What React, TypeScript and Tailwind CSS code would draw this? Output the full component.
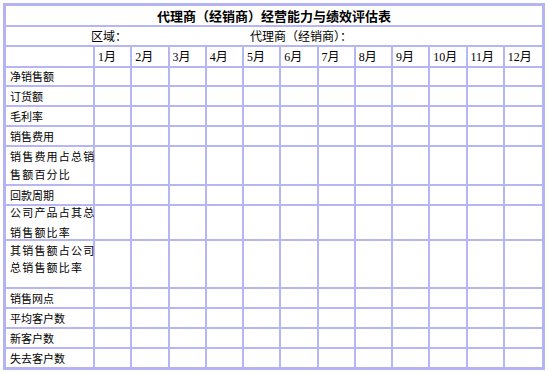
import React from 'react';

const months = ['1月', '2月', '3月', '4月', '5月', '6月', '7月', '8月', '9月', '10月', '11月', '12月'];

// label lines, row height (border included), gap between wrapped lines
const rows: { lines: string[]; h: string; gap?: string; top?: boolean }[] = [
    { lines: ['净销售额'], h: 'h-[19px]' },
    { lines: ['订货额'], h: 'h-[20px]' },
    { lines: ['毛利率'], h: 'h-[20px]' },
    { lines: ['销售费用'], h: 'h-[20px]' },
    { lines: ['销售费用占总销', '售额百分比'], h: 'h-[39px]', gap: 'gap-[7px]' },
    { lines: ['回款周期'], h: 'h-[20px]' },
    { lines: ['公司产品占其总', '销售额比率'], h: 'h-[35px]', gap: 'gap-[9px]' },
    { lines: ['其销售额占公司', '总销售额比率'], h: 'h-[48px]', gap: 'gap-[6px]', top: true },
    { lines: ['销售网点'], h: 'h-[20px]' },
    { lines: ['平均客户数'], h: 'h-[20px]' },
    { lines: ['新客户数'], h: 'h-[20px]' },
    { lines: ['失去客户数'], h: 'h-[18px]' },
];

const line = 'border-[#b6b6f5]';

export default function App() {
    return (
        <div className="w-[550px] h-[372px] bg-white pt-[3px] pl-[3px] text-black font-['Noto_Sans_CJK_SC',sans-serif]">
            <table className="w-[542px] table-fixed border-separate border-spacing-0 border-[3px] border-[#b4b4f4]">
                <colgroup>
                    <col className="w-[89px]" />
                    {months.map(m => <col key={m} />)}
                </colgroup>
                <tbody>
                    {/* Title */}
                    <tr>
                        <td colSpan={13} className={`h-[21px] p-0 border-b-2 ${line} text-center text-[13px] font-bold leading-none`}>
                            代理商（经销商）经营能力与绩效评估表
                        </td>
                    </tr>
                    {/* Region / dealer */}
                    <tr>
                        <td colSpan={13} className={`h-[20px] p-0 border-b-2 ${line} text-[12px] leading-none`}>
                            <div className="flex pl-[85px]">
                                <span className="w-[159px]">区域：</span>
                                <span>代理商（经销商）：</span>
                            </div>
                        </td>
                    </tr>
                    {/* Month header */}
                    <tr>
                        <td className={`h-[21px] p-0 border-r-2 border-b-2 ${line}`}></td>
                        {months.map((m, i) => (
                            <td
                                key={m}
                                className={`h-[21px] p-0 pl-[3px] border-b-2 ${i < 11 ? 'border-r-2' : ''} ${line} text-[12px] leading-none font-['Liberation_Serif','Noto_Sans_CJK_SC',serif]`}
                            >
                                {m}
                            </td>
                        ))}
                    </tr>
                    {rows.map((r, ri) => {
                        const last = ri === rows.length - 1;
                        const multi = r.lines.length > 1;
                        return (
                            <tr key={ri}>
                                <td
                                    className={`${r.h} p-0 pl-[4px] border-r-2 ${last ? '' : 'border-b-2'} ${line} text-[11px] leading-none ${r.top ? 'align-top pt-[4px]' : ''} whitespace-nowrap`}
                                >
                                    <div className={`flex flex-col ${r.gap ?? ''} ${multi ? 'tracking-[1.2px]' : ''}`}>
                                        {r.lines.map((l, li) => (
                                            <span key={li}>{l}</span>
                                        ))}
                                    </div>
                                </td>
                                {months.map((m, i) => (
                                    <td
                                        key={m}
                                        className={`${r.h} p-0 ${i < 11 ? 'border-r-2' : ''} ${last ? '' : 'border-b-2'} ${line}`}
                                    ></td>
                                ))}
                            </tr>
                        );
                    })}
                </tbody>
            </table>
        </div>
    );
}
